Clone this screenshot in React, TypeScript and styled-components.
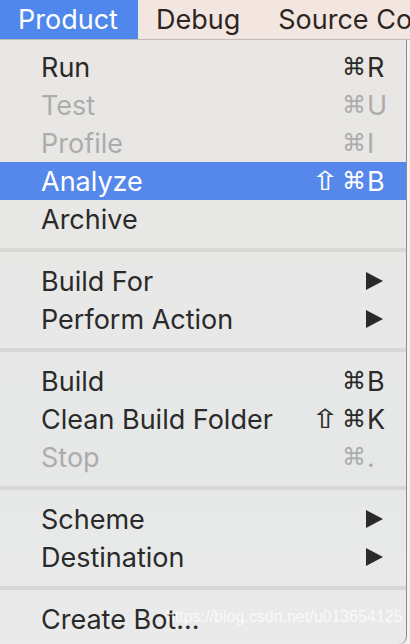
import styled, { createGlobalStyle } from "styled-components";

const GlobalStyle = createGlobalStyle`
  html, body {
    margin: 0;
    padding: 0;
    width: 410px;
    height: 644px;
    overflow: hidden;
    background: #f4f4f4;
  }
  body {
    font-family: Inter, "Liberation Sans", "DejaVu Sans", sans-serif;
    -webkit-font-smoothing: antialiased;
  }
`;

type MenuEntry =
    | { kind: "item"; label: string; keys?: string[]; disabled?: boolean; active?: boolean; submenu?: boolean }
    | { kind: "separator" };

const ENTRIES: MenuEntry[] = [
    { kind: "item", label: "Run", keys: ["⌘", "R"] },
    { kind: "item", label: "Test", keys: ["⌘", "U"], disabled: true },
    { kind: "item", label: "Profile", keys: ["⌘", "I"], disabled: true },
    { kind: "item", label: "Analyze", keys: ["⇧", "⌘", "B"], active: true },
    { kind: "item", label: "Archive" },
    { kind: "separator" },
    { kind: "item", label: "Build For", submenu: true },
    { kind: "item", label: "Perform Action", submenu: true },
    { kind: "separator" },
    { kind: "item", label: "Build", keys: ["⌘", "B"] },
    { kind: "item", label: "Clean Build Folder", keys: ["⇧", "⌘", "K"] },
    { kind: "item", label: "Stop", keys: ["⌘", "."], disabled: true },
    { kind: "separator" },
    { kind: "item", label: "Scheme", submenu: true },
    { kind: "item", label: "Destination", submenu: true },
    { kind: "separator" },
    { kind: "item", label: "Create Bot..." },
];

const Screen = styled.div`
  width: 410px;
  height: 644px;
  display: flex;
  flex-direction: column;
  position: relative;
  overflow: hidden;
`;

const MenuBar = styled.div`
  height: 39px;
  display: flex;
  align-items: stretch;
  background: #f3e6e1;
  border-bottom: 1px solid #c9c4c2;
  flex-shrink: 0;
  overflow: hidden;
`;

const BarItem = styled.div<{ $open?: boolean }>`
  display: flex;
  align-items: center;
  padding: 0 20px 0 18px;
  font-size: 27px;
  color: ${p => (p.$open ? "#ffffff" : "#2b2624")};
  background: ${p => (p.$open ? "#4f87ec" : "transparent")};
  white-space: nowrap;
`;

const Body = styled.div`
  flex: 1;
  display: flex;
  min-height: 0;
`;

const Menu = styled.div`
  width: 407px;
  flex-shrink: 0;
  padding-top: 8px;
  box-sizing: border-box;
  background: linear-gradient(180deg, #e9e6e3 0%, #e7e8e7 45%, #e6e8e8 70%, #eaeaea 100%);
  border-right: 1px solid #8e8e8e;
  border-bottom-right-radius: 8px;
  box-shadow: 1px 0 2px rgba(0, 0, 0, 0.15);
`;

const Row = styled.div<{ $active?: boolean; $disabled?: boolean }>`
  height: 38px;
  display: flex;
  align-items: center;
  justify-content: space-between;
  padding: 0 18px 0 41px;
  font-size: 27px;
  color: ${p => (p.$active ? "#ffffff" : p.$disabled ? "#acacac" : "#2a2a2a")};
  background: ${p => (p.$active ? "#5588ea" : "transparent")};
`;

const Label = styled.span`
  white-space: nowrap;
`;

const Shortcut = styled.span`
  display: flex;
  align-items: center;
`;

const Modifier = styled.span<{ $shift?: boolean }>`
  display: inline-block;
  font-family: "DejaVu Sans", sans-serif;
  font-size: 24px;
  width: 26px;
  text-align: center;
  margin-right: ${p => (p.$shift ? "3px" : "0")};
  transform: ${p => (p.$shift ? "scale(1.45, 1.1)" : "none")};
`;

const Key = styled.span`
  width: 21px;
  text-align: left;
`;

const Arrow = styled.svg`
  width: 17px;
  height: 18px;
  margin-right: 5px;
  fill: currentColor;
`;

const Separator = styled.div`
  height: 4px;
  margin: 10px 0;
  background: #d7d7d5;
`;

const Outside = styled.div`
  flex: 1;
  background: #f2f2f2;
`;

const Watermark = styled.span`
  position: absolute;
  left: 166px;
  top: 608px;
  font-family: "Liberation Sans", Arial, sans-serif;
  font-size: 16px;
  color: rgba(255, 255, 255, 0.75);
  white-space: nowrap;
  pointer-events: none;
`;

export default function App() {
    return (
        <>
            <GlobalStyle />
            <Screen>
                <MenuBar>
                    <BarItem $open>Product</BarItem>
                    <BarItem>Debug</BarItem>
                    <BarItem>Source Control</BarItem>
                </MenuBar>
                <Body>
                    <Menu>
                        {ENTRIES.map((entry, i) =>
                            entry.kind === "separator" ? (
                                <Separator key={i} />
                            ) : (
                                <Row key={i} $active={entry.active} $disabled={entry.disabled}>
                                    <Label>{entry.label}</Label>
                                    {entry.keys && (
                                        <Shortcut>
                                            {entry.keys.slice(0, -1).map((m, j) => (
                                                <Modifier key={j} $shift={m === "⇧"}>{m}</Modifier>
                                            ))}
                                            <Key>{entry.keys[entry.keys.length - 1]}</Key>
                                        </Shortcut>
                                    )}
                                    {entry.submenu && (
                                        <Arrow viewBox="0 0 17 18">
                                            <path d="M0 0 L17 9 L0 18 Z" />
                                        </Arrow>
                                    )}
                                </Row>
                            )
                        )}
                    </Menu>
                    <Outside />
                </Body>
                <Watermark>https://blog.csdn.net/u013654125</Watermark>
            </Screen>
        </>
    );
}
